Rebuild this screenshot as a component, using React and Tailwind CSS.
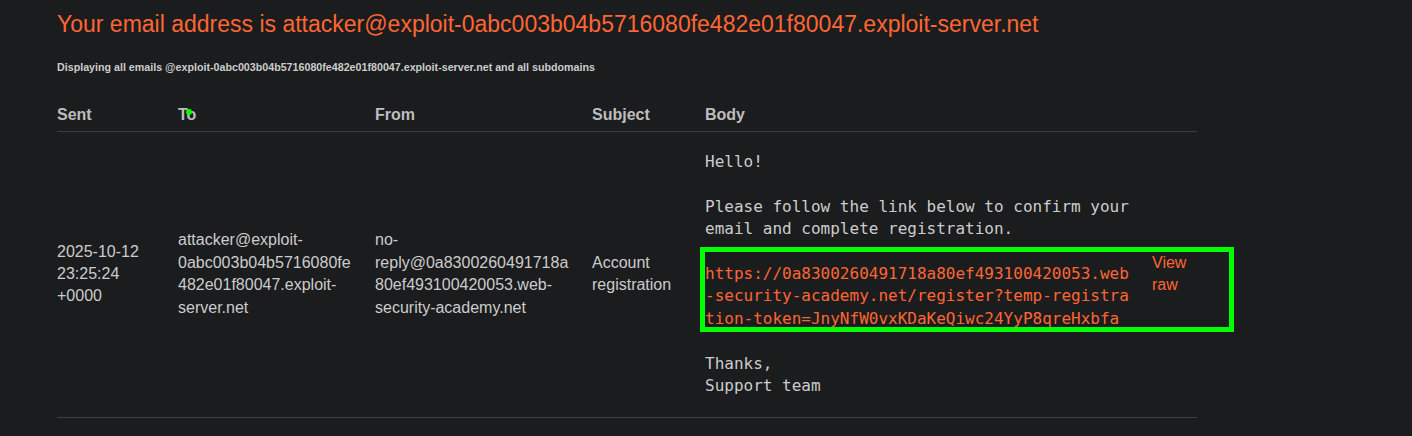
import React from "react";

export default function App() {
  const cols = "grid grid-cols-[121px_197px_217px_113px_447px_45px]";
  return (
    <div className="relative min-h-[436px] bg-[#1b1c1e] font-['Liberation_Sans',Arial,sans-serif] text-[#cccccc]">
      <div className="pl-[57px] pt-[10px]">
        <h1 className="text-[23px] leading-[28px] text-[#ff6633] font-normal">
          Your email address is attacker@exploit-0abc003b04b5716080fe482e01f80047.exploit-server.net
        </h1>
        <p className="mt-[23px] text-[10.7px] leading-[13px] font-bold text-[#cccccc]">
          Displaying all emails @exploit-0abc003b04b5716080fe482e01f80047.exploit-server.net and all subdomains
        </p>
        <div className="mt-[32px] w-[1140px]">
          <div className={`${cols} border-b border-[#3c3d40] pb-[7px] text-[16px] leading-[18px] font-bold text-[#bdbdbd]`}>
            <div>Sent</div>
            <div>To</div>
            <div>From</div>
            <div>Subject</div>
            <div className="col-span-2">Body</div>
          </div>
          <div className={`${cols} items-center border-b border-[#3c3d40] pt-[19px] pb-[20px] text-[16px] leading-[22.4px]`}>
            <div className="pr-5">2025-10-12 23:25:24 +0000</div>
            <div className="pr-5 break-words">attacker@exploit-0abc003b04b5716080fe482e01f80047.exploit-server.net</div>
            <div className="pr-5 break-words">no-reply@0a8300260491718a80ef493100420053.web-security-academy.net</div>
            <div className="pr-5">Account registration</div>
            <div className="pr-5">
              <pre className="m-0 whitespace-pre-wrap font-['DejaVu_Sans_Mono',monospace] text-[16px] leading-[22.4px] text-[#cccccc]">
                {"Hello!\n\nPlease follow the link below to confirm your email and complete registration.\n\n"}
                <a className="break-all text-[#ff6633]">https://0a8300260491718a80ef493100420053.web-security-academy.net/register?temp-registration-token=JnyNfW0vxKDaKeQiwc24YyP8qreHxbfa</a>
                {"\n\nThanks,\nSupport team"}
              </pre>
            </div>
            <div className="text-[#ff6633]">View raw</div>
          </div>
        </div>
      </div>
      <div className="absolute left-[700px] top-[247px] h-[85px] w-[534px] border-[5px] border-[#00ff00]" />
      <div className="absolute left-[186px] top-[109px] h-[6px] w-[6px] rounded-full bg-[#00ff00]" />
    </div>
  );
}
